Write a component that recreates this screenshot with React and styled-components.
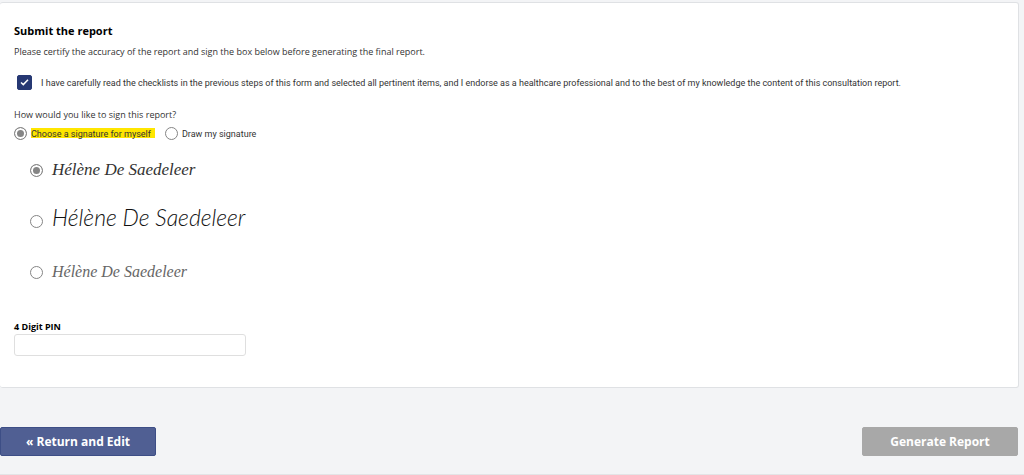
import React, { useState } from "react";
import styled, { createGlobalStyle } from "styled-components";

const GlobalStyle = createGlobalStyle`
  * {
    box-sizing: border-box;
  }
  body {
    margin: 0;
    background: #f3f4f6;
    color: #333;
    font-family: "Open Sans", "Noto Sans", sans-serif;
    font-size: 9px;
    line-height: 12px;
  }
`;

const Page = styled.div`
  min-height: 100vh;
  display: flex;
  flex-direction: column;
  padding: 2px 5px 0 0;
  border-bottom: 1px solid #e3e4e6;
`;

const Card = styled.form`
  display: flex;
  flex-direction: column;
  align-items: flex-start;
  padding: 20px 14px 31px;
  background: #fff;
  border: 1px solid #dfe1e4;
  border-left: 0;
  border-radius: 3px;
`;

const Title = styled.h1`
  margin: 0;
  color: #000;
  font-size: 11px;
  line-height: 16px;
  font-weight: 700;
`;

const Text = styled.p`
  margin: 7px 0 0;
`;

const CheckLabel = styled.label`
  display: flex;
  align-items: center;
  gap: 9px;
  margin: 17px 0 0 3px;
  font-family: Roboto, sans-serif;
`;

const CheckWrap = styled.span`
  position: relative;
  display: flex;
  flex: none;
  width: 15px;
  height: 15px;

  & svg {
    position: absolute;
    inset: 0;
    pointer-events: none;
  }
`;

const Checkbox = styled.input`
  appearance: none;
  width: 100%;
  height: 100%;
  margin: 0;
  border: 1px solid #263873;
  border-radius: 2px;
  background: #fff;

  &:checked {
    background: #263873;
  }
`;

const Fieldset = styled.fieldset`
  min-width: 0;
  margin: 19px 0 0;
  padding: 0;
  border: 0;
`;

const Legend = styled.legend`
  padding: 0;
`;

const Choices = styled.div`
  display: flex;
  gap: 10px;
  margin-top: 6px;
`;

const Choice = styled.label`
  display: flex;
  align-items: center;
  gap: 4px;
  font-family: Roboto, sans-serif;
`;

const Radio = styled.input`
  appearance: none;
  flex: none;
  width: 13px;
  height: 13px;
  margin: 0;
  border: 1px solid #858585;
  border-radius: 50%;
  background: #fff;
  box-shadow: inset 0 0 0 2px #fff;

  &:checked {
    background: #858585;
  }
`;

const Marked = styled.span`
  padding-right: 4px;
  background: linear-gradient(to bottom, #ffe600 10px, transparent 10px);
`;

const Signatures = styled.div`
  display: flex;
  flex-direction: column;
  margin: 5px 0 0 16px;
`;

const SignatureRow = styled.label`
  display: flex;
  align-items: center;
  gap: 9px;
  height: 51px;
`;

const Signature = styled.span`
  padding-bottom: ${(props) => props.$lift}px;
  color: ${(props) => props.$color};
  font-family: ${(props) => props.$font};
  font-size: ${(props) => props.$size}px;
  font-style: italic;
  font-weight: ${(props) => props.$weight};
  line-height: 28px;
`;

const PinLabel = styled.label`
  margin-top: 23px;
  color: #000;
  font-weight: 700;
`;

const PinInput = styled.input`
  width: 232px;
  max-width: 100%;
  height: 22px;
  margin-top: 1px;
  padding: 0 8px;
  border: 1px solid #dfdfdf;
  border-radius: 3px;
  background: #fff;
  font: inherit;
`;

const Actions = styled.div`
  display: flex;
  justify-content: space-between;
  margin-top: 39px;
  padding-right: 1px;
`;

const Button = styled.button`
  width: 156px;
  height: 29px;
  padding: 0;
  border: 1px solid ${(props) => (props.$primary ? "#3d4e86" : "#a8a8a8")};
  border-radius: 2px;
  background: ${(props) => (props.$primary ? "#505f93" : "#a8a8a8")};
  color: #fff;
  font-family: inherit;
  font-size: 12px;
  font-weight: 700;
  line-height: 16px;
`;

const signatures = [
  { id: "flowing", font: '"Liberation Serif", cursive', size: 17, weight: 400, lift: 2, color: "#333" },
  { id: "print", font: "Lato, cursive", size: 23, weight: 300, lift: 10, color: "#111" },
  { id: "light", font: '"Liberation Serif", cursive', size: 16, weight: 400, lift: 2, color: "#666" },
];

export default function App() {
  const [agreed, setAgreed] = useState(true);
  const [method, setMethod] = useState("choose");
  const [signature, setSignature] = useState("flowing");
  const [pin, setPin] = useState("");

  return (
    <Page>
      <GlobalStyle />
      <Card id="report">
        <Title>Submit the report</Title>
        <Text>Please certify the accuracy of the report and sign the box below before generating the final report.</Text>

        <CheckLabel>
          <CheckWrap>
            <Checkbox type="checkbox" checked={agreed} onChange={(e) => setAgreed(e.target.checked)} />
            {agreed && (
              <svg viewBox="0 0 15 15" fill="none" stroke="#fff" strokeWidth="1.5">
                <path d="M4 7.5 6.3 9.6 11 4.8" />
              </svg>
            )}
          </CheckWrap>
          I have carefully read the checklists in the previous steps of this form and selected all pertinent items, and I endorse as a healthcare professional and to the best of my knowledge the content of this consultation report.
        </CheckLabel>

        <Fieldset>
          <Legend>How would you like to sign this report?</Legend>
          <Choices>
            <Choice>
              <Radio type="radio" name="method" checked={method === "choose"} onChange={() => setMethod("choose")} />
              <Marked>Choose a signature for myself</Marked>
            </Choice>
            <Choice>
              <Radio type="radio" name="method" checked={method === "draw"} onChange={() => setMethod("draw")} />
              Draw my signature
            </Choice>
          </Choices>
        </Fieldset>

        <Signatures>
          {signatures.map((s) => (
            <SignatureRow key={s.id}>
              <Radio type="radio" name="signature" checked={signature === s.id} onChange={() => setSignature(s.id)} />
              <Signature $font={s.font} $size={s.size} $weight={s.weight} $lift={s.lift} $color={s.color}>
                Hélène De Saedeleer
              </Signature>
            </SignatureRow>
          ))}
        </Signatures>

        <PinLabel htmlFor="pin">4 Digit PIN</PinLabel>
        <PinInput id="pin" type="password" maxLength={4} value={pin} onChange={(e) => setPin(e.target.value)} />
      </Card>

      <Actions>
        <Button type="button" $primary>« Return and Edit</Button>
        <Button type="submit" form="report" disabled>Generate Report</Button>
      </Actions>
    </Page>
  );
}
